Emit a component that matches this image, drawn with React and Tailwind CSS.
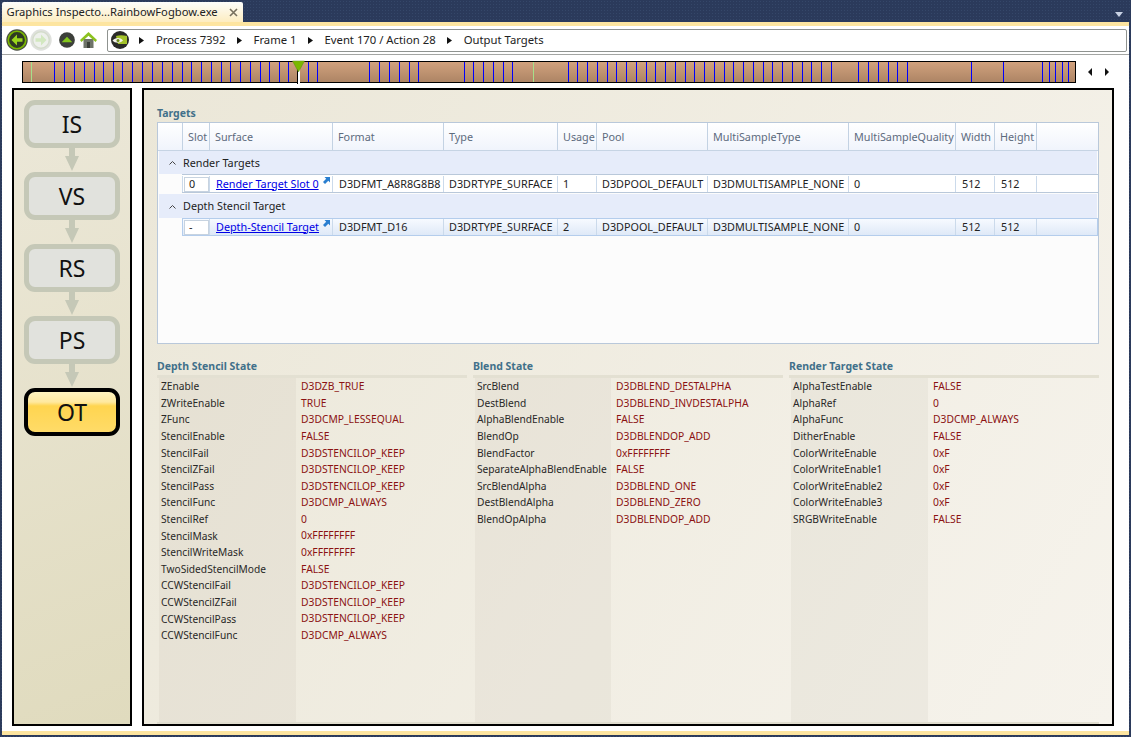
const F = { fontFamily: '"Noto Sans", sans-serif' };

const TICKS = [54,64,74,84,94,103,113,122,132,142,152,162,172,182,191,201,211,221,230,240,250,260,269,279,288,308,317,369,379,389,399,409,418,464,473,483,493,503,512,568,577,587,597,607,616,626,636,646,655,665,675,685,694,704,714,724,733,743,753,763,772,782,792,802,811,821,831,858,868,878,888,897,907,971,1003,1042,1049,1055,1062,1068];

const COLS = [25, 27, 123, 111, 114, 39, 111, 141, 107, 39, 42, 61];
const HEAD = ['', 'Slot', 'Surface', 'Format', 'Type', 'Usage', 'Pool', 'MultiSampleType', 'MultiSampleQuality', 'Width', 'Height', ''];

const DEPTH = [['ZEnable','D3DZB_TRUE'],['ZWriteEnable','TRUE'],['ZFunc','D3DCMP_LESSEQUAL'],['StencilEnable','FALSE'],['StencilFail','D3DSTENCILOP_KEEP'],['StencilZFail','D3DSTENCILOP_KEEP'],['StencilPass','D3DSTENCILOP_KEEP'],['StencilFunc','D3DCMP_ALWAYS'],['StencilRef','0'],['StencilMask','0xFFFFFFFF'],['StencilWriteMask','0xFFFFFFFF'],['TwoSidedStencilMode','FALSE'],['CCWStencilFail','D3DSTENCILOP_KEEP'],['CCWStencilZFail','D3DSTENCILOP_KEEP'],['CCWStencilPass','D3DSTENCILOP_KEEP'],['CCWStencilFunc','D3DCMP_ALWAYS']];
const BLEND = [['SrcBlend','D3DBLEND_DESTALPHA'],['DestBlend','D3DBLEND_INVDESTALPHA'],['AlphaBlendEnable','FALSE'],['BlendOp','D3DBLENDOP_ADD'],['BlendFactor','0xFFFFFFFF'],['SeparateAlphaBlendEnable','FALSE'],['SrcBlendAlpha','D3DBLEND_ONE'],['DestBlendAlpha','D3DBLEND_ZERO'],['BlendOpAlpha','D3DBLENDOP_ADD']];
const RT = [['AlphaTestEnable','FALSE'],['AlphaRef','0'],['AlphaFunc','D3DCMP_ALWAYS'],['DitherEnable','FALSE'],['ColorWriteEnable','0xF'],['ColorWriteEnable1','0xF'],['ColorWriteEnable2','0xF'],['ColorWriteEnable3','0xF'],['SRGBWriteEnable','FALSE']];

function NavCircle({ children, size = 22 }) {
  return <svg width={size} height={size} viewBox="0 0 24 24" className="block shrink-0">{children}</svg>;
}

function Toolbar() {
  return (
    <div className="flex h-[28px] items-center bg-white pl-[4px] pr-[2px]">
      <NavCircle>
        <circle cx="12" cy="12" r="11.700" fill="#4a4e44" />
        <circle cx="12" cy="12" r="9.500" fill="#2f3a22" stroke="#7ab800" strokeWidth="1.800" />
        <path d="M12 6 6 12l6 6v-4h6v-4h-6z" fill="#9ad61c" />
      </NavCircle>
      <div className="ml-[2px]">
        <NavCircle>
          <circle cx="12" cy="12" r="11.700" fill="#dfe1dd" />
          <circle cx="12" cy="12" r="9" fill="#eef0ec" stroke="#d4dccb" strokeWidth="1.500" />
          <path d="M12 6l6 6-6 6v-4H6v-4h6z" fill="#d3e8c0" />
        </NavCircle>
      </div>
      <div className="ml-[7px]">
        <NavCircle size={16}>
          <circle cx="12" cy="12" r="11.800" fill="#3c3f3a" />
          <path d="M12 7l8 8.500H4z" fill="#84c81c" />
        </NavCircle>
      </div>
      <div className="ml-[5px]">
        <svg width="17" height="16" viewBox="0 0 17 16" className="block">
          <rect x="3.500" y="7" width="10" height="9" fill="#6e7369" />
          <rect x="7" y="10" width="3" height="6" fill="#3b3f38" />
          <path d="M8.500 0 0 8l1.500 2 7-6.200 7 6.200L17 8z" fill="#8cc21e" />
        </svg>
      </div>
      <div style={F} className="ml-[10px] flex h-[23px] flex-1 items-center rounded-[2px] border-[1.5px] border-[#8f9390] bg-white pl-[3px] text-[11.300px] text-[#222]">
        <svg width="18" height="18" viewBox="0 0 18 18" className="block shrink-0">
          <circle cx="9" cy="9" r="9" fill="#2a2a28" />
          <path d="M5 5c3-1 7-1 11 0v8H7z" fill="#a3c22a" />
          <path d="M1.500 9.500C4 6.500 9 6 12 9.500 9 12.500 4 12.500 1.500 9.500z" fill="#f2f2e8" />
          <circle cx="7" cy="9.500" r="1.500" fill="#6d8a18" />
        </svg>
        {['Process 7392', 'Frame 1', 'Event 170 / Action 28', 'Output Targets'].map((t, i) => (
          <span key={t} className="flex items-center">
            <svg className={i === 0 ? 'ml-[10px] mr-[12px]' : 'ml-[11px] mr-[12px]'} width="5" height="7" viewBox="0 0 5 7"><path d="M0 0l5 3.500L0 7z" fill="#111" /></svg>
            <span className="whitespace-nowrap">{t}</span>
          </span>
        ))}
      </div>
    </div>
  );
}

function Timeline() {
  return (
    <div className="flex h-[34px] items-center border-t border-t-[#a3a5a3] bg-white pl-[20px]">
      <svg width="1056" height="24" viewBox="22 57 1056 24" className="block">
        <defs>
          <linearGradient id="tl" x1="0" y1="0" x2="0" y2="1">
            <stop offset="0" stopColor="#d2a27e" />
            <stop offset="1" stopColor="#ac8464" />
          </linearGradient>
        </defs>
        <rect x="22.500" y="58.500" width="1053" height="21" fill="url(#tl)" stroke="#000" />
        <rect x="31" y="59" width="1" height="20" fill="#a6e08a" />
        <rect x="533" y="59" width="1" height="20" fill="#a6e08a" />
        {TICKS.map((x) => <rect key={x} x={x} y="59" width="1" height="20" fill="#0000ff" />)}
        <rect x="297" y="66" width="3" height="15" fill="#fff" />
        <rect x="297" y="66" width="1" height="15" fill="#000" />
        <path d="M292.500 58h12l-6 11z" fill="#7ab800" stroke="#5b8a10" strokeWidth=".5" />
      </svg>
      <svg className="ml-[10px]" width="21" height="8" viewBox="0 0 21 8">
        <path d="M4 0v8L0 4zM17 0l4 4-4 4z" fill="#111" />
      </svg>
    </div>
  );
}

function StageArrow() {
  return (
    <svg width="14" height="24" viewBox="0 0 14 24" className="block">
      <rect x="4" y="0" width="6" height="9" fill="#c5c8b7" />
      <path d="M0 8h14l-7 15z" fill="#c5c8b7" />
    </svg>
  );
}

function Stage({ label, active }) {
  return active ? (
    <div style={F} className="flex h-[48px] w-[96px] items-center justify-center rounded-[11px] border-[4px] border-black bg-[linear-gradient(#fff4c0_0%,#ffe9a0_25%,#ffd550_35%,#ffdb68_100%)] text-[23px] text-[#111]">{label}</div>
  ) : (
    <div style={F} className="flex h-[48px] w-[96px] items-center justify-center rounded-[11px] border-[5px] border-[#c5c8b7] bg-[#e1e2dd] text-[23px] text-[#111]">{label}</div>
  );
}

function LinkMark() {
  return (
    <svg className="absolute right-[2px] top-[1px]" width="7" height="7" viewBox="0 0 7 7">
      <path d="M1.500 0H7v5.500L5.300 3.800 2 7 0 5l3.200-3.300z" fill="#2a7fd0" />
    </svg>
  );
}

function Cell({ w, children, className = '' }) {
  return <div style={{ width: w }} className={`relative flex h-full shrink-0 items-center overflow-hidden whitespace-nowrap border-r border-r-[#cbdaeb] ${className}`}>{children}</div>;
}

function DataRow({ slot, name, format, usage, selected, h, top }) {
  const vals = [format, 'D3DRTYPE_SURFACE', usage, 'D3DPOOL_DEFAULT', 'D3DMULTISAMPLE_NONE', '0', '512', '512', ''];
  const bg = selected ? 'bg-[linear-gradient(#f7faff,#dfe9f7)] outline outline-1 -outline-offset-1 outline-[#b4cdec]' : 'bg-white';
  return (
    <div style={{ height: h }} className={`ml-[24px] flex border-y border-y-[#b9c8da] text-[#222] ${bg} ${top ? 'pt-[1px]' : ''}`}>
      <div className="flex h-full w-[28px] shrink-0 items-center border-x border-x-[#cbdaeb] pl-[1px]">
        <div className="flex h-[15px] w-[25px] items-center border border-[#c7d3e0] bg-white pl-[4px]">{slot}</div>
      </div>
      <Cell w={COLS[2]} className="pl-[6px]">
        <a className="text-[#0000e6] underline">{name}</a>
        <LinkMark />
      </Cell>
      {vals.map((v, i) => (
        <Cell key={i} w={COLS[i + 3] - (i === 8 ? 3 : 0)} className={i === 8 ? 'border-r-0' : i === 0 || i === 6 || i === 7 ? 'pl-[6px]' : 'pl-[5px]'}>{v}</Cell>
      ))}
    </div>
  );
}

function GroupRow({ label, h }) {
  return (
    <div style={{ height: h }} className="mx-[1px] flex items-center bg-[#e6ecfa] pt-[1px] text-[#222]">
      <svg className="ml-[10px] mr-[7px]" width="7" height="4" viewBox="0 0 7 4"><path d="M.5 3.500 3.500.5l3 3" fill="none" stroke="#444" strokeWidth="1" /></svg>
      <span>{label}</span>
    </div>
  );
}

function Targets() {
  return (
    <div style={F} className="flex h-[222px] flex-col border border-[#b9c8da] bg-[#fcfcfc] text-[10.800px] leading-none">
      <div className="flex h-[28px] shrink-0 border-b border-b-[#c6d4e4] bg-[linear-gradient(#ffffff,#f0f4fc)] text-[#5d6b7d]">
        {HEAD.map((h, i) => (
          <div key={i} style={{ width: COLS[i] }} className={`flex h-full shrink-0 items-center whitespace-nowrap pl-[5px] pt-[1px] ${i < 11 ? 'border-r border-r-[#c3d2e3]' : ''}`}>{h}</div>
        ))}
      </div>
      <GroupRow label="Render Targets" h={23} />
      <DataRow slot="0" name="Render Target Slot 0" format="D3DFMT_A8R8G8B8" usage="1" h={19} top />
      <div className="h-[1px] shrink-0" />
      <GroupRow label="Depth Stencil Target" h={24} />
      <DataRow slot="-" name="Depth-Stencil Target" format="D3DFMT_D16" usage="2" selected h={18} />
    </div>
  );
}

function PropList({ title, rows, nameW = 137 }) {
  return (
    <div className="flex w-[310px] flex-col">
      <div className="flex h-[17px] items-center text-[10.500px] font-bold text-[#41708a]">{title}</div>
      <div className="h-[3px] bg-[#e3e0d2]" />
      <div className="relative flex-1 pl-[2px]">
        <div className="flex h-full flex-col">
          {rows.map(([k, v]) => (
            <div key={k} className="flex h-[16.600px] shrink-0 items-center text-[10.200px] leading-none">
              <div style={{ width: nameW }} className="shrink-0 whitespace-nowrap pl-[2px] text-[#222]">{k}</div>
              <div className="ml-[5px] -translate-y-[0.5px] whitespace-nowrap text-[10.300px] text-[#8b1212]">{v}</div>
            </div>
          ))}
        </div>
        <div style={{ width: nameW }} className="pointer-events-none absolute inset-y-0 left-[2px] bg-[#8a8570]/[0.07]" />
      </div>
    </div>
  );
}

export default function App() {
  return (
    <div className="flex h-[737px] w-[1131px] flex-col overflow-hidden bg-[#2b3a5b] bg-[radial-gradient(#354769_1px,transparent_1px)] bg-[size:3px_3px] p-[2px]">
      <div className="flex h-[20px] shrink-0 items-stretch">
        <div style={F} className="flex w-[241px] items-center rounded-t-[2px] bg-[linear-gradient(#fdfdfb,#fdedc0)] pl-[4.500px] text-[11.200px] text-[#222]">
          <span className="whitespace-nowrap">Graphics Inspecto...RainbowFogbow.exe</span>
          <svg className="ml-auto mr-[5px]" width="9" height="9" viewBox="0 0 9 9"><path d="M1 1l7 7M8 1 1 8" stroke="#77705e" strokeWidth="1.600" /></svg>
        </div>
        <svg className="ml-auto mr-[6px] mt-[10px]" width="8" height="5" viewBox="0 0 8 5"><path d="M0 0h8L4 5z" fill="#c8d2e4" /></svg>
      </div>
      <div className="h-[4px] shrink-0 bg-[#fde5a0]" />
      <div className="flex min-h-0 flex-1 flex-col bg-white">
        <Toolbar />
        <Timeline />
        <div className="flex min-h-0 flex-1 gap-[10px] pb-[5px] pl-[10px] pr-[15px]">
          <div className="flex w-[120px] flex-col items-center border-2 border-black bg-[linear-gradient(160deg,#ece8d9,#e0dbbe)] pt-[10px]">
            {['IS', 'VS', 'RS', 'PS'].map((s) => (
              <div key={s} className="flex flex-col items-center">
                <Stage label={s} />
                <StageArrow />
              </div>
            ))}
            <Stage label="OT" active />
          </div>
          <div style={F} className="flex min-w-0 flex-1 flex-col border-2 border-black bg-[linear-gradient(120deg,#ebe7d8,#f6f3ec)] px-[13px]">
            <div className="flex h-[32px] shrink-0 items-end text-[10.500px] font-bold text-[#41708a]">Targets</div>
            <Targets />
            <div className="mt-[14px] flex min-h-0 flex-1 gap-[6px] border-b-2 border-b-[#e0ddcf]">
              <PropList title="Depth Stencil State" rows={DEPTH} />
              <PropList title="Blend State" rows={BLEND} nameW={136} />
              <PropList title="Render Target State" rows={RT} />
            </div>
          </div>
        </div>
      </div>
      <div className="h-[4px] shrink-0 bg-[#fde5a0]" />
    </div>
  );
}
